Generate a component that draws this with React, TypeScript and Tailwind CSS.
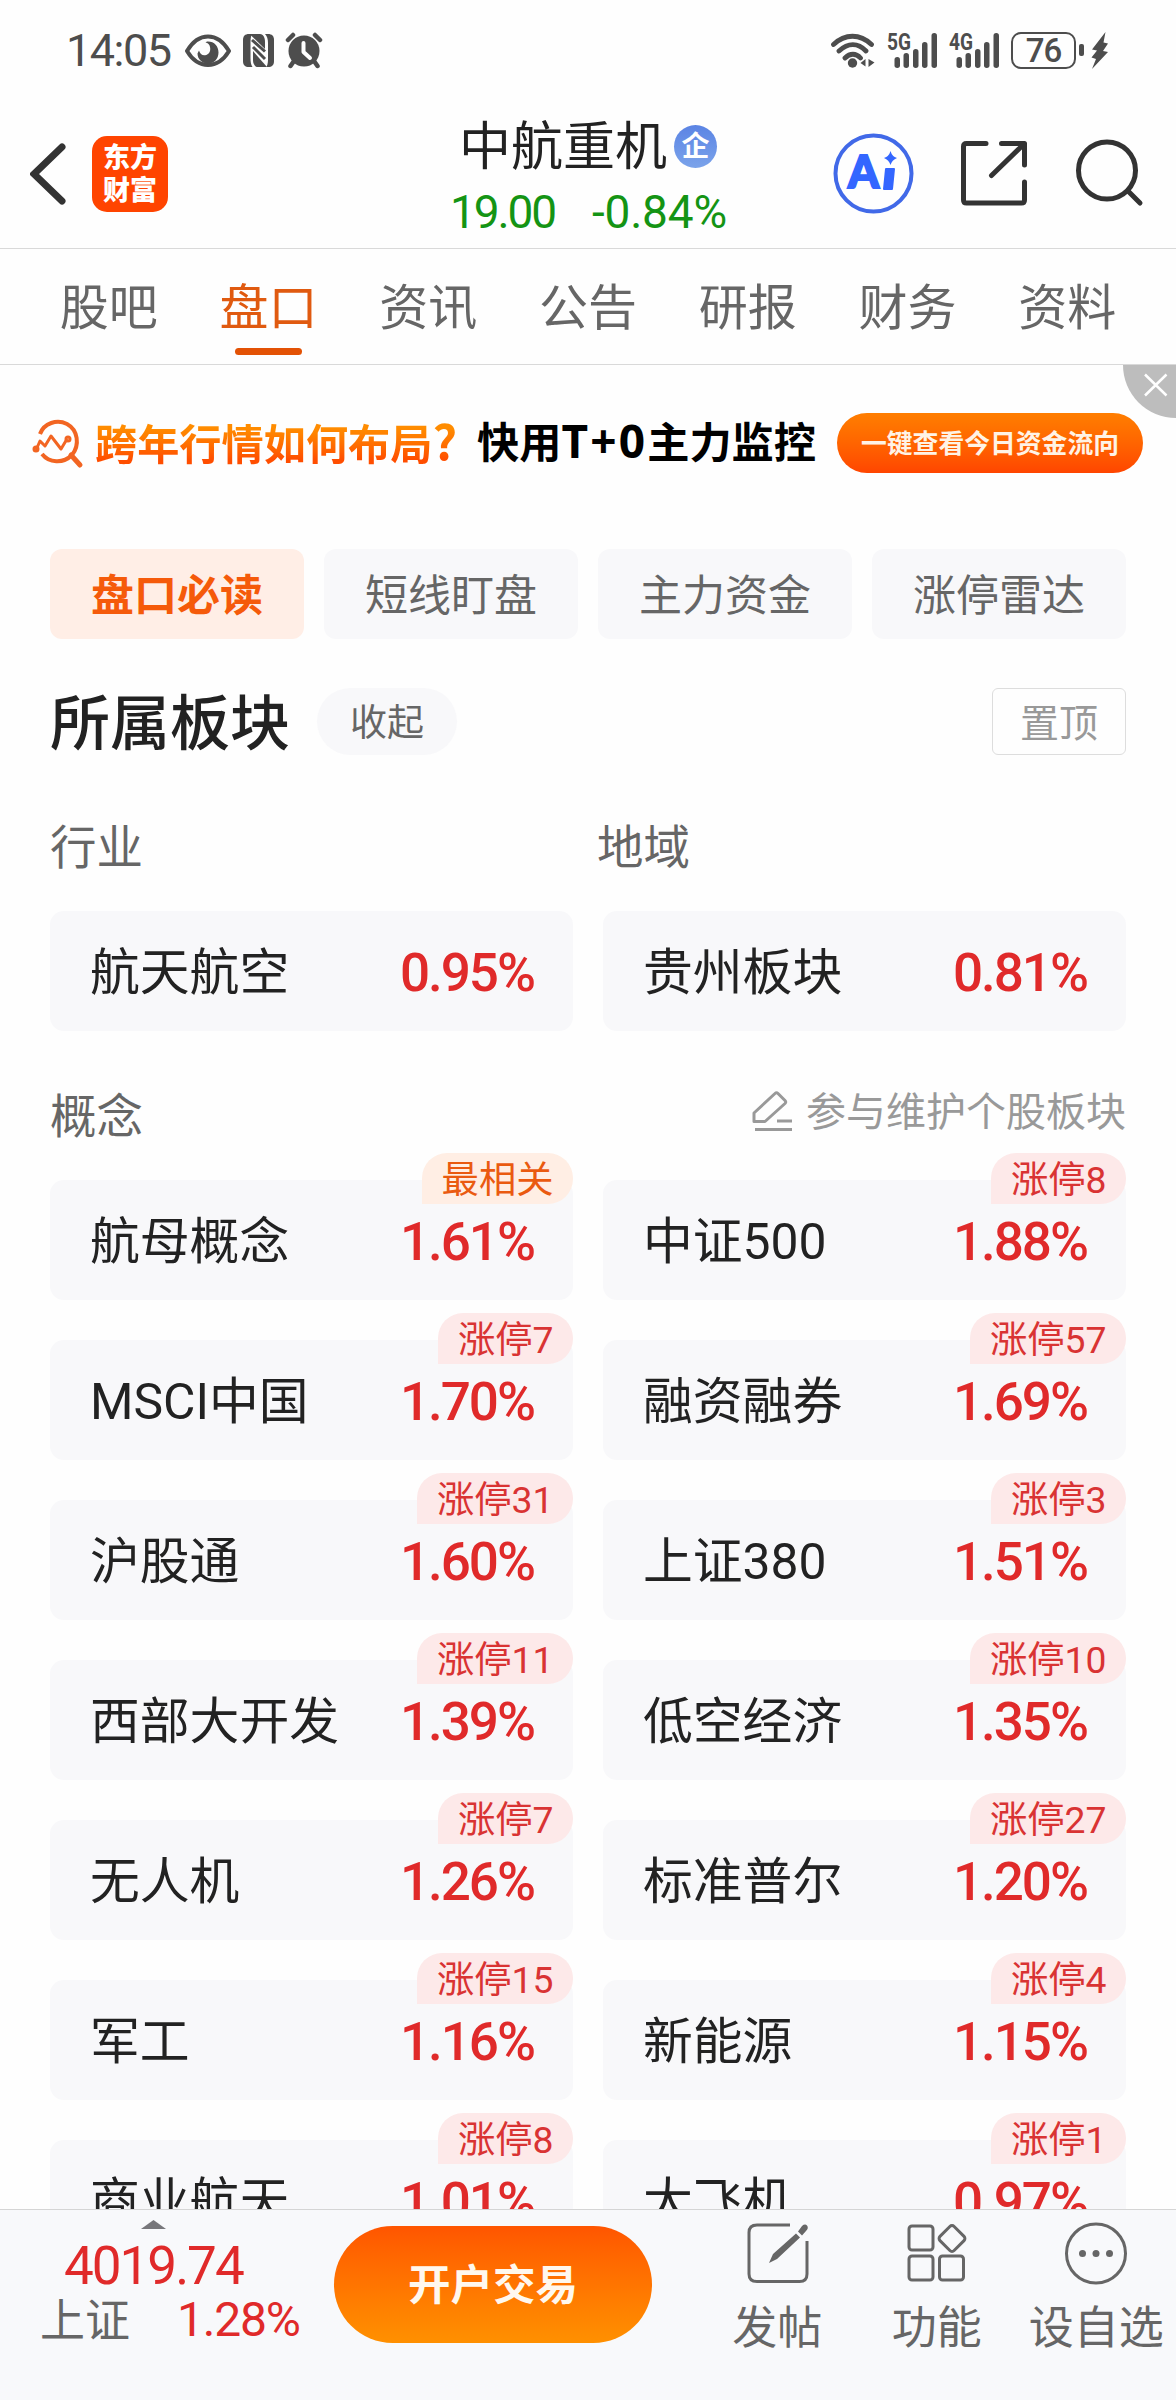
import type { ReactNode } from "react";
import clsx from "clsx";

interface Sector {
  name: string;
  change: string;
  tag?: string;
  hot?: boolean;
}

const TABS = ["股吧", "盘口", "资讯", "公告", "研报", "财务", "资料"];
const CHIPS = ["盘口必读", "短线盯盘", "主力资金", "涨停雷达"];

const CONCEPTS: Sector[] = [
  { name: "航母概念", change: "1.61%", tag: "最相关", hot: true },
  { name: "中证500", change: "1.88%", tag: "涨停8" },
  { name: "MSCI中国", change: "1.70%", tag: "涨停7" },
  { name: "融资融券", change: "1.69%", tag: "涨停57" },
  { name: "沪股通", change: "1.60%", tag: "涨停31" },
  { name: "上证380", change: "1.51%", tag: "涨停3" },
  { name: "西部大开发", change: "1.39%", tag: "涨停11" },
  { name: "低空经济", change: "1.35%", tag: "涨停10" },
  { name: "无人机", change: "1.26%", tag: "涨停7" },
  { name: "标准普尔", change: "1.20%", tag: "涨停27" },
  { name: "军工", change: "1.16%", tag: "涨停15" },
  { name: "新能源", change: "1.15%", tag: "涨停4" },
  { name: "商业航天", change: "1.01%", tag: "涨停8" },
  { name: "大飞机", change: "0.97%", tag: "涨停1" },
];

function SignalBars({ label }: { label: string }) {
  return (
    <svg className="overflow-visible" width="51" height="37" viewBox="0 0 51 37" fill="#4d4d4d">
      <text
        x="0"
        y="18"
        fontSize="23"
        fontWeight="700"
        textLength="24"
        lengthAdjust="spacingAndGlyphs"
      >
        {label}
      </text>
      <rect x="7.5" y="25" width="5.5" height="11" rx="2.7" />
      <rect x="16.5" y="21" width="5.5" height="15" rx="2.7" />
      <rect x="26" y="17" width="5.5" height="19" rx="2.7" />
      <rect x="35" y="10" width="5.5" height="26" rx="2.7" />
      <rect x="44.5" y="1" width="5.5" height="35" rx="2.7" />
    </svg>
  );
}

function StatusBar() {
  return (
    <div className="flex h-[100px] shrink-0 items-center pl-[66px] pr-[67px] text-[#4d4d4d]">
      <span className="w-[119px] text-[45px] leading-none tracking-[-1.5px]">
        14:05
      </span>

      {/* eye / nfc / alarm */}
      <svg width="138" height="37" viewBox="0 0 138 37" fill="none">
        <path
          d="M2 19C8 9 15 4.500 23 4.500S38 9 44 19C38 29 31 33 23 33S8 29 2 19Z"
          stroke="#4d4d4d"
          strokeWidth="4"
          strokeLinejoin="round"
        />
        <path
          d="M22 9.500C29 9 33.500 14 33.500 20.500C33.500 27 29 31.500 23 31.500C17 31.500 12.500 27 12.500 21.500L14 18.500C15 22 17 23.500 20 23.200C24 22.800 26 19 25 15C24.500 12.500 23 11 20.500 10.500Z"
          fill="#4d4d4d"
        />
        <path
          d="M64 2H67C65.500 5 65.500 8 65.500 12V26C65.500 30 66 33 67.500 35H64C60 35 58 33 58 29V8C58 4 60 2 64 2Z"
          fill="#4d4d4d"
        />
        <path
          d="M80 2H83C87 2 89 4 89 8V29C89 33 87 35 83 35H81.500C83 32 83 29 83 26V11C83 7 82 4 80 2Z"
          fill="#4d4d4d"
        />
        <path d="M64.500 2H75C78.500 2 80 6 80 10V17L64.500 2Z" fill="#4d4d4d" />
        <path d="M68 19L82 35H73C70 35 68 32 68 28Z" fill="#4d4d4d" />
        <path d="M67 8L80 19.500M68 15L80 27" stroke="#4d4d4d" strokeWidth="3" />
        <circle cx="119" cy="19" r="15.500" fill="#4d4d4d" />
        <path
          d="M103 8L108 3M130 3L135 8M109 29L105.500 34M129 29L132.500 34"
          stroke="#4d4d4d"
          strokeWidth="4.500"
          strokeLinecap="round"
        />
        <path
          d="M118.500 11V20L125 26"
          stroke="#fff"
          strokeWidth="4"
          strokeLinecap="round"
          strokeLinejoin="round"
        />
      </svg>

      <div className="ml-auto flex items-center">
        <svg width="56" height="37" viewBox="0 0 56 37" fill="none">
          <path
            d="M2.500 12.500C14 1.500 29 1.500 40.500 12.500M8 19C17 10.500 27 10.500 35 19M14 26C19 21 25 21 29.500 26"
            stroke="#4d4d4d"
            strokeWidth="4.800"
            strokeLinecap="round"
          />
          <circle cx="21.500" cy="31" r="4.700" fill="#4d4d4d" />
          <path d="M34.500 27V34.500L29.500 31ZM37.500 27L43.500 30.500L37.500 35Z" fill="#4d4d4d" />
        </svg>
        <div className="mr-[11px] flex gap-[11px]">
          <SignalBars label="5G" />
          <SignalBars label="4G" />
        </div>
        <div className="flex h-[37px] w-[65px] items-center justify-center rounded-[10px] border-[2.5px] border-[#4d4d4d] text-[33px] leading-none font-medium tracking-[-1px]">
          76
        </div>
        <div className="ml-[3px] h-[12px] w-[5px] rounded-[2px] bg-[#4d4d4d]" />
        <svg className="ml-[7px]" width="18" height="37" viewBox="0 0 18 37" fill="#4d4d4d">
          <path d="M14.500 0L1 17.500L6 18.500L0.500 25.500L5 27L1 37L17 20L12 19L17 11.500L12.500 10.500Z" />
        </svg>
      </div>
    </div>
  );
}

function Header() {
  return (
    <header className="flex h-[149px] shrink-0 items-start border-b border-[#d9d9d9] pl-[30px]">
      <div className="mt-[36px] flex w-[412px] items-center">
        <svg width="36" height="76" viewBox="0 0 36 76" fill="none">
          <path d="M32 11L4 38L32 65" stroke="#333" strokeWidth="7" strokeLinecap="round" />
        </svg>
        <div className="ml-[26px] flex size-[76px] flex-col items-center justify-center rounded-[15px] bg-[#ff4400] pb-[4px] font-['Noto_Sans_CJK_SC'] text-[27px] leading-[33px] font-black text-white">
          <span>东方</span>
          <span>财富</span>
        </div>
      </div>

      <div className="mt-[9px] flex w-[300px] flex-col">
        <div className="flex items-center gap-[7px] pl-[17px]">
          <h1 className="font-['Noto_Sans_CJK_SC'] text-[52px] leading-[68px] text-[#222]">
            中航重机
          </h1>
          <span className="mt-[6px] flex size-[43px] items-center justify-center rounded-full bg-linear-to-b from-[#5b84e4] to-[#7ba3ea] pb-[4px] font-['Noto_Sans_CJK_SC'] text-[28px] leading-none font-bold text-white">
            企
          </span>
        </div>
        <div className="mt-[12px] flex pl-[8px] text-[46px] leading-[46px] text-[#149414]">
          <span className="w-[142px] tracking-[-2.1px]">19.00</span>
          <span className="tracking-[-0.2px]">-0.84%</span>
        </div>
      </div>

      <svg className="ml-[88px] mt-[32px] shrink-0" width="330" height="84" viewBox="0 0 330 84" fill="none">
        {/* assistant */}
        <circle cx="43.500" cy="41.500" r="38" stroke="#4169e8" strokeWidth="4" />
        <text
          x="18"
          y="56"
          fontSize="46"
          fontWeight="900"
          fontFamily="Lato, sans-serif"
          fill="#3366ff"
          stroke="#3366ff"
          strokeWidth="2"
          textLength="31"
          lengthAdjust="spacingAndGlyphs"
        >
          A
        </text>
        <path d="M56 37H64L62 57H54Z" fill="#3366ff" stroke="#3366ff" strokeWidth="2" strokeLinejoin="round" />
        <path d="M60.500 19Q62 24.500 67 26Q62 28 60.500 33Q59 28 54 26Q59 24.500 60.500 19Z" fill="#3366ff" />
        <g stroke="#333" strokeWidth="5" strokeLinecap="round" strokeLinejoin="round">
          {/* share */}
          <path d="M156 11.500H136.500Q133.500 11.500 133.500 14.500V68Q133.500 71 136.500 71H191.500Q194.500 71 194.500 68V50M171.500 11.500H194.500V33M161.500 43.500L193 13" />
          {/* search */}
          <circle cx="277" cy="38.500" r="28.500" />
          <path d="M298 59L310 71" />
        </g>
      </svg>
    </header>
  );
}

function Tabs() {
  return (
    <nav className="flex h-[116px] shrink-0 border-b border-[#d9d9d9] px-[29px]">
      {TABS.map((tab) => {
        const active = tab === "盘口";
        return (
          <div
            key={tab}
            className={clsx(
              "flex flex-1 flex-col items-center pt-[19px] font-['Noto_Sans_CJK_SC'] text-[49px] leading-[72px]",
              active ? "text-[#e05a10]" : "text-[#666]"
            )}
          >
            {tab}
            {active && <span className="mt-[8px] h-[7px] w-[67px] rounded-full bg-[#e35205]" />}
          </div>
        );
      })}
    </nav>
  );
}

function Banner() {
  return (
    <div className="relative flex h-[156px] shrink-0 items-center overflow-hidden pl-[32px] font-['Noto_Sans_CJK_SC'] font-bold">
      <svg width="52" height="52" viewBox="0 0 52 52" fill="none" stroke="#f26522" strokeWidth="4">
        <path d="M8 17C12 6 25 2 35 7C46 13 48 28 40 38C31 47 17 46 10 37" />
        <path d="M39 38L48 48" strokeWidth="5" strokeLinecap="round" />
        <path d="M4 33L8 24L13 29L19 19L29 32L35 22" strokeWidth="3" strokeLinejoin="round" />
        <circle cx="4" cy="32" r="1.500" />
        <circle cx="36" cy="22" r="1.500" />
      </svg>
      <span className="mb-[6px] ml-[11px] w-[382px] bg-linear-to-b from-[#ff8c00] from-30% to-[#ff4e00] to-80% bg-clip-text text-[42.2px] leading-[60px] whitespace-nowrap text-transparent">
        跨年行情如何布局<span className="text-[48px]">?</span>
      </span>
      <span className="mb-[6px] w-[360px] text-[42.2px] leading-[60px] whitespace-nowrap text-black">
        快用<span className="font-['Open_Sans'] text-[46px] tracking-[2.2px]">T+0</span>主力监控
      </span>
      <span className="flex h-[60px] w-[306px] items-center justify-center rounded-full bg-linear-to-b from-[#ff7e00] to-[#ff4500] pb-[2px] text-[25.8px] leading-none whitespace-nowrap text-[#fff3e6]">
        一键查看今日资金流向
      </span>
      <div className="absolute right-0 top-0 h-[53px] w-[53px] rounded-bl-full bg-[#bdbdbd]">
        <svg width="53" height="53" viewBox="0 0 53 53" stroke="#fff" strokeWidth="2.500">
          <path d="M22 9.500L43.500 30.500M43.500 9.500L22 30.500" />
        </svg>
      </div>
    </div>
  );
}

function Label({ children, className }: { children: ReactNode; className?: string }) {
  return (
    <h3
      className={clsx(
        "font-['Noto_Sans_CJK_SC'] text-[46.5px] leading-[60px] text-[#666]",
        className
      )}
    >
      {children}
    </h3>
  );
}

function SectorCard({ name, change, tag, hot }: Sector) {
  return (
    <div className="relative flex h-[120px] items-center justify-between rounded-[14px] bg-[#f8f8fa] pl-[40px] pr-[39px] pt-[4px]">
      <span className="text-[49.8px] leading-[72px] text-[#222]">{name}</span>
      <span className="text-[53px] leading-[60px] font-medium tracking-[-2px] text-[#e02a2a]">
        {change}
      </span>
      {tag && (
        <span
          className={clsx(
            "absolute right-0 -top-[27px] h-[51px] rounded-[25px] rounded-bl-none px-[19.5px] text-[37.3px] leading-[54px]",
            hot ? "bg-[#ffeee4] text-[#ea5a10]" : "bg-[#fde9e9] text-[#d93333]"
          )}
        >
          {tag}
        </span>
      )}
    </div>
  );
}

function Sectors() {
  return (
    <main className="min-h-0 flex-1 overflow-hidden px-[50px] pt-[28px]">
      <div className="grid grid-cols-4 gap-[20px] font-['Noto_Sans_CJK_SC'] text-[43px] leading-[86px]">
        {CHIPS.map((chip, i) => (
          <div
            key={chip}
            className={clsx(
              "h-[90px] rounded-[12px] text-center",
              i === 0 ? "bg-[#ffeee6] font-bold text-[#f55a0a]" : "bg-[#f8f8fa] text-[#666]"
            )}
          >
            {chip}
          </div>
        ))}
      </div>

      <div className="mt-[49px] flex h-[67px] items-center font-['Noto_Sans_CJK_SC']">
        <h2 className="pb-[6px] text-[60px] leading-[67px] font-medium text-[#222]">所属板块</h2>
        <button className="ml-[27px] h-[67px] w-[140px] rounded-full bg-[#f8f8fa] pb-[4px] text-[37px] leading-[62px] text-[#666]">
          收起
        </button>
        <button className="ml-auto h-[67px] w-[134px] rounded-[6px] border border-[#ddd] pb-[4px] text-[39px] leading-[60px] text-[#999]">
          置顶
        </button>
      </div>

      <div className="mt-[59px] flex">
        <Label className="w-[547px]">行业</Label>
        <Label>地域</Label>
      </div>
      <div className="mt-[37px] grid grid-cols-2 gap-[30px]">
        <SectorCard name="航天航空" change="0.95%" />
        <SectorCard name="贵州板块" change="0.81%" />
      </div>

      <div className="mt-[52px] flex h-[60px] items-center justify-between">
        <Label>概念</Label>
        <div className="-mt-[5px] flex items-center gap-[13px] text-[#999]">
          <svg width="42" height="42" viewBox="0 0 42 42" fill="none" stroke="#999" strokeWidth="3">
            <path
              d="M3 31V23L24 3.500Q25.500 2 27 3.500L34 10.500Q35.500 12 34 13.500L14 31.500H3Z"
              strokeLinejoin="round"
            />
            <path d="M26 31H41M4 39.500H41" />
          </svg>
          <span className="pb-[3px] font-['Noto_Sans_CJK_SC'] text-[40px] leading-[60px]">
            参与维护个股板块
          </span>
        </div>
      </div>
      <div className="mt-[37px] grid grid-cols-2 gap-x-[30px] gap-y-[40px]">
        {CONCEPTS.map((item) => (
          <SectorCard key={item.name} {...item} />
        ))}
      </div>
    </main>
  );
}

function FooterAction({ label, children }: { label: string; children: ReactNode }) {
  return (
    <div className="flex w-[159.5px] flex-col items-center pt-[11px]">
      <svg width="64" height="64" viewBox="0 0 64 64" fill="none" stroke="#666" strokeWidth="3">
        {children}
      </svg>
      <span className="mt-[8px] font-['Noto_Sans_CJK_SC'] text-[45px] leading-[64px] whitespace-nowrap text-[#666]">
        {label}
      </span>
    </div>
  );
}

function Footer() {
  return (
    <footer className="flex h-[191px] shrink-0 border-t border-[#d5d5d5] bg-[#f8f9fb]">
      <div className="w-[334px]">
        <svg className="ml-[141px] mt-[10px]" width="25" height="9" viewBox="0 0 25 9">
          <path d="M12.500 0L25 9H0Z" fill="#77777b" />
        </svg>
        <div className="mt-[9px] ml-[64px] text-[53px] leading-[56px] tracking-[-2px] text-[#e02a2a]">
          4019.74
        </div>
        <div className="-mt-[2px] flex items-center pl-[40px]">
          <span className="pb-[4px] font-['Noto_Sans_CJK_SC'] text-[45px] leading-[52px] text-[#666]">
            上证
          </span>
          <span className="ml-[47px] text-[48px] leading-[52px] tracking-[-1.2px] text-[#e02a2a]">
            1.28%
          </span>
        </div>
      </div>
      <button className="mt-[16px] h-[117px] w-[318px] rounded-full bg-linear-to-b from-[#ff5500] to-[#ff9000] pb-[5px] font-['Noto_Sans_CJK_SC'] text-[42.5px] leading-none font-bold text-[#fff8ee]">
        开户交易
      </button>
      <div className="ml-auto flex">
        <FooterAction label="发帖">
          <path d="M45 4H12Q4 4 4 11.500V53Q4 60.500 12 60.500H54.500Q62 60.500 62 53V20" />
          <path d="M24 42L28 33L51 12.500L55 16.500L32 38ZM53 10.500L57 5Q60 2.500 62 4.500Q64 7 61 10L57 14.500Z" fill="#666" stroke="none" />
        </FooterAction>
        <FooterAction label="功能">
          <rect x="4" y="5" width="24" height="24" rx="3" />
          <rect x="4" y="35" width="24" height="24" rx="3" />
          <rect x="34.500" y="35" width="24" height="24" rx="3" />
          <rect x="37" y="7.500" width="20" height="20" rx="3" transform="rotate(45 47 17.500)" />
        </FooterAction>
        <FooterAction label="设自选">
          <circle cx="32" cy="32.500" r="29.500" />
          <g fill="#666" stroke="none">
            <circle cx="18.500" cy="32.500" r="3.500" />
            <circle cx="32" cy="32.500" r="3.500" />
            <circle cx="45.500" cy="32.500" r="3.500" />
          </g>
        </FooterAction>
      </div>
    </footer>
  );
}

export default function App() {
  return (
    <div className="flex h-[2400px] w-[1176px] flex-col overflow-hidden bg-[#fefefe] font-[Roboto,'Noto_Sans_CJK_SC',sans-serif]">
      <StatusBar />
      <Header />
      <Tabs />
      <Banner />
      <Sectors />
      <Footer />
    </div>
  );
}
